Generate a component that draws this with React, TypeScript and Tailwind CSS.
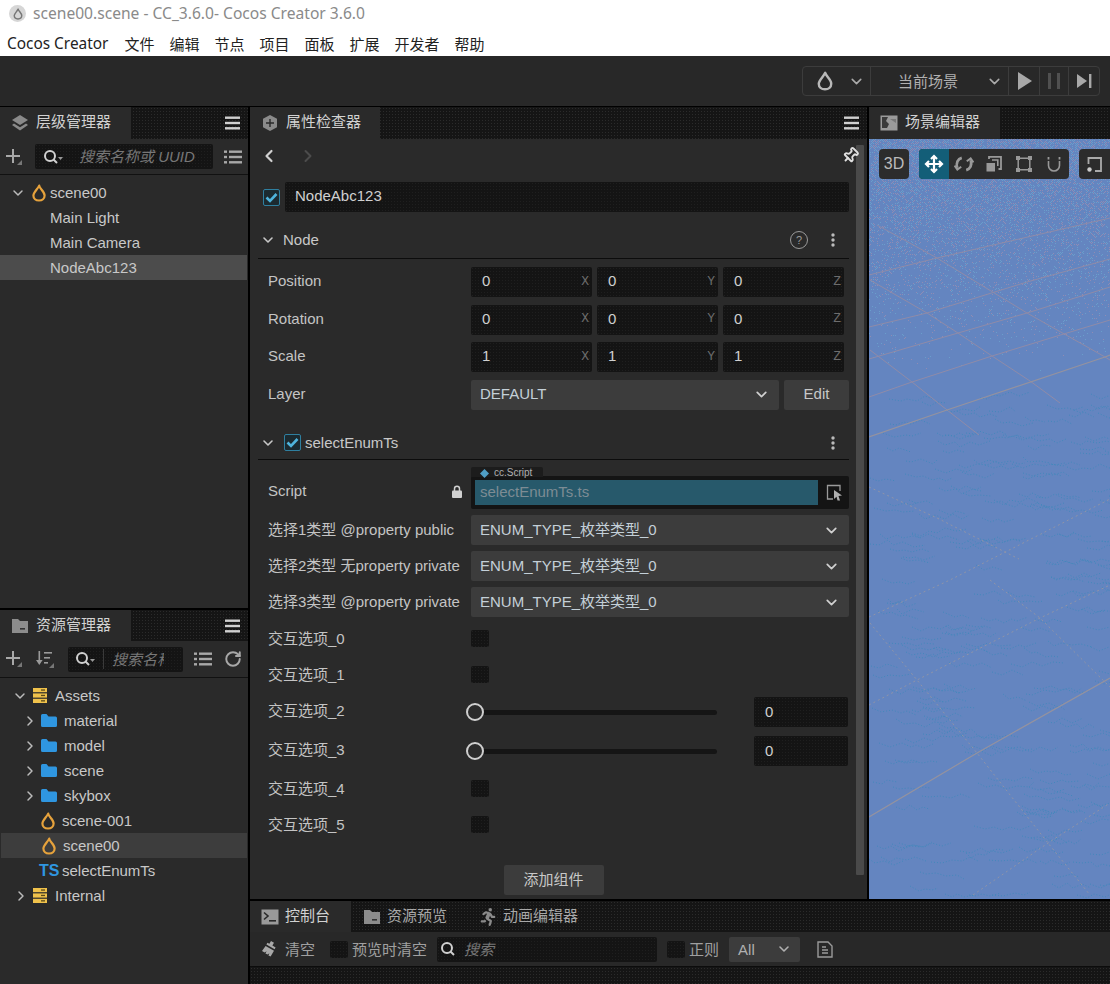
import type { ReactNode } from 'react';
import { ChevronDown, ChevronRight, ChevronLeft, RotateCw, Pin } from 'lucide-react';
import { FaRunning } from 'react-icons/fa';

const darkDots = "bg-[#151515] bg-[radial-gradient(#2b2b2b_0.6px,transparent_0.7px)] bg-[length:3px_3px]";
const fieldDots = "bg-[#141414] bg-[radial-gradient(#1f1f1f_0.6px,transparent_0.7px)] bg-[length:3px_3px]";

const Drop = ({ color = '#e6a23c', size = 18 }: { color?: string; size?: number }) => (
  <svg width={size} height={size} viewBox="0 0 18 18" fill="none">
    <path d="M9.2 1.6C9.6 4.6 14.6 7.6 14.6 11.4C14.6 14.6 12.2 16.5 9 16.5C5.8 16.5 3.4 14.6 3.4 11.4C3.4 8.6 7.6 5 9.2 1.6Z" stroke={color} strokeWidth="2.2" strokeLinejoin="round" />
  </svg>
);

const Hamburger = () => (
  <svg width="16" height="14" viewBox="0 0 16 14" fill="#d0d0d0">
    <rect y="0.5" width="15" height="2.4" />
    <rect y="5.8" width="15" height="2.4" />
    <rect y="11.1" width="15" height="2.4" />
  </svg>
);

const PlusCorner = () => (
  <svg width="18" height="18" viewBox="0 0 18 18" fill="#a8a8a8">
    <rect x="7" y="1" width="2" height="14" />
    <rect x="1" y="7" width="14" height="2" />
    <path d="M17 12V17H12Z" fill="#777" />
  </svg>
);

const ListIcon = () => (
  <svg width="18" height="14" viewBox="0 0 18 14" fill="#a8a8a8">
    <rect y="0.5" width="3" height="2.4" />
    <rect y="5.8" width="3" height="2.4" />
    <rect y="11.1" width="3" height="2.4" />
    <rect x="5" y="0.5" width="13" height="2.4" />
    <rect x="5" y="5.8" width="13" height="2.4" />
    <rect x="5" y="11.1" width="13" height="2.4" />
  </svg>
);

const Magnifier = ({ caret = true }: { caret?: boolean }) => (
  <svg width="20" height="16" viewBox="0 0 20 16" fill="none">
    <circle cx="7" cy="7" r="5" stroke="#d0d0d0" strokeWidth="2" />
    <path d="M10.5 10.5L14 14" stroke="#d0d0d0" strokeWidth="2" />
    {caret && <path d="M15 8H20L17.5 11Z" fill="#999" />}
  </svg>
);

const Layers = () => (
  <svg width="18" height="18" viewBox="0 0 18 18" fill="#8a8a8a">
    <path d="M9 1L17 6L9 11L1 6Z" />
    <path d="M3 9.5L9 13.2L15 9.5L17 11L9 16.5L1 11Z" />
  </svg>
);

const CubeIcon = () => (
  <svg width="18" height="18" viewBox="0 0 16 18">
    <path d="M8 1L15 4.8V13.2L8 17L1 13.2V4.8Z" fill="#8a8a8a" />
    <path d="M8 5V13M4 9H12" stroke="#2a2a2a" strokeWidth="1.4" />
  </svg>
);

const FolderGrey = () => (
  <svg width="18" height="16" viewBox="0 0 18 16">
    <path d="M1 1H7L9 3H17V15H1Z" fill="#8c8c8c" />
    <rect x="9" y="10" width="5" height="1.6" fill="#333" />
  </svg>
);

const ImageIcon = () => (
  <svg width="18" height="16" viewBox="0 0 18 16">
    <rect x="0.5" y="0.5" width="17" height="15" fill="#9a9a9a" />
    <path d="M2 2H8L6 6L9 9L7 13H2Z" fill="#3a3a3a" />
    <path d="M10 4H16V8Z" fill="#777" />
  </svg>
);

const TerminalIcon = () => (
  <svg width="18" height="16" viewBox="0 0 18 16">
    <rect x="0.5" y="0.5" width="17" height="15" fill="#9a9a9a" />
    <path d="M3 3.5L7 7L3 10.5" stroke="#2a2a2a" strokeWidth="1.6" fill="none" />
    <rect x="8" y="11" width="7" height="1.6" fill="#2a2a2a" />
  </svg>
);

const BrushIcon = () => (
  <svg width="18" height="18" viewBox="0 0 18 18" fill="#a8a8a8">
    <path d="M11 1L14 2.8L12.4 5.6L15.6 7.4L14.6 9.2L6.4 4.6L7.4 2.8L9.4 3.8Z" />
    <path d="M5.6 6L14 10.8L10.6 16.6L8.4 15.4L9.4 13.2L7.6 14.6L5.4 13.4L6.6 11.2L4.6 12.6L2 11Z" />
  </svg>
);

const DbIcon = () => (
  <svg width="14" height="15" viewBox="0 0 14 15">
    <rect y="0" width="14" height="4.2" fill="#f0c24b" />
    <rect y="5.4" width="14" height="4.2" fill="#f0c24b" />
    <rect y="10.8" width="14" height="4.2" fill="#f0c24b" />
    <rect x="8" y="1.4" width="4" height="1.3" fill="#5a4a1a" />
    <rect x="8" y="6.8" width="4" height="1.3" fill="#5a4a1a" />
    <rect x="8" y="12.2" width="4" height="1.3" fill="#5a4a1a" />
  </svg>
);

const BlueFolder = () => (
  <svg width="16" height="13" viewBox="0 0 16 13">
    <path d="M0 1.5A1.5 1.5 0 0 1 1.5 0H5.5L7.5 2.5H14.5A1.5 1.5 0 0 1 16 4V11.5A1.5 1.5 0 0 1 14.5 13H1.5A1.5 1.5 0 0 1 0 11.5Z" fill="#2f96e0" />
  </svg>
);

const Dots = () => (
  <svg width="4" height="14" viewBox="0 0 4 14" fill="#bbb">
    <circle cx="2" cy="2" r="1.7" />
    <circle cx="2" cy="7" r="1.7" />
    <circle cx="2" cy="12" r="1.7" />
  </svg>
);

const Check = () => (
  <div className="flex h-[17px] w-[17px] items-center justify-center rounded-[2px] border border-[#2f7f9f] bg-[#1b2a30]">
    <svg width="13" height="11" viewBox="0 0 13 11" fill="none">
      <path d="M1.5 5.5L5 9L11.5 2" stroke="#4fb4dc" strokeWidth="2.6" />
    </svg>
  </div>
);

const EmptyBox = () => <div className={`h-[17px] w-[18px] rounded-[2px] ${fieldDots}`} />;

const Panel = ({ icon, title, width, height, menu = true }: { icon: ReactNode; title: string; width: string; height: string; menu?: boolean }) => (
  <div className={`flex ${height} shrink-0 items-stretch ${darkDots}`}>
    <div className={`flex ${width} items-center gap-[7px] bg-[#2a2a2a] pl-[11px] text-[#d2d2d2]`}>
      {icon}
      <span className="pb-[3px]">{title}</span>
    </div>
    {menu && (
      <div className="ml-auto flex items-center pr-[7px]">
        <Hamburger />
      </div>
    )}
  </div>
);

const Row = ({ label, children, h = 'h-[30px]', pad = 'pb-[2px]' }: { label: string; children: ReactNode; h?: string; pad?: string }) => (
  <div className={`flex ${h} items-center`}>
    <div className={`w-[213px] shrink-0 whitespace-nowrap pl-[10px] text-[#c4c4c4] ${pad}`}>{label}</div>
    {children}
  </div>
);

const Vec3 = ({ value }: { value: string }) => (
  <div className="flex gap-[5px]">
    {['X', 'Y', 'Z'].map((axis) => (
      <div key={axis} className={`flex h-[30px] w-[121px] items-center justify-between rounded-[2px] pb-[3px] pl-[11px] pr-[3px] text-[#d0d0d0] ${fieldDots}`}>
        <span>{value}</span>
        <span className="pt-px font-['Liberation_Mono',monospace] text-[13px] text-[#6c6c6c]">{axis}</span>
      </div>
    ))}
  </div>
);

const SelectBox = ({ text, width = 'w-[378px]', pad = 'pb-[2px]' }: { text: string; width?: string; pad?: string }) => (
  <div className={`flex h-[30px] ${width} items-center justify-between rounded-[2px] bg-[#3c3c3c] pl-[9px] pr-[9px] text-[#c4d0d8]`}>
    <span className={pad}>{text}</span>
    <ChevronDown size={17} strokeWidth={2.4} color="#d0d0d0" />
  </div>
);

const Slider = () => (
  <div className="flex items-center">
    <div className="relative h-[5px] w-[246px] rounded-full bg-[#151515]">
      <div className="absolute left-[-5px] top-[-7px] h-[18px] w-[18px] rounded-full border-2 border-[#cfcfcf] bg-[#2a2a2a]" />
    </div>
    <div className={`ml-[37px] flex h-[30px] w-[94px] items-center rounded-[2px] pb-px pl-[11px] text-[#d0d0d0] ${fieldDots}`}>0</div>
  </div>
);

const TreeRow = ({ left, children, selected }: { left: string; children: ReactNode; selected?: string }) => (
  <div className={`flex h-[25px] items-center ${left} ${selected ?? ''}`}>{children}</div>
);

// scene floor: a few perspective lines plus the dither noise
const gridStrong = [
  'M0 298L78 271L236 218L241 216',
  'M0 678L108 614L241 539',
];
const gridMid = [
  'M0 220L89 194L158 174L241 148',
  'M0 188L58 174L158 143L241 120',
  'M0 136L68 119L241 79',
  'M0 258L43 243L123 217L198 194L241 181',
  'M8 86L68 119L158 174L236 218L241 221',
  'M1 141L58 174L89 194L123 217L161 242L191 264',
  'M1 211L43 243L78 271L110 296',
];
const gridFaint = [
  'M0 566L48 541L171 479L241 446',
  'M0 478L81 441L241 360',
  'M104 756L179 704L241 664',
  'M1 484L48 541L108 614L179 704L221 756',
  'M121 441L171 479L241 548',
  'M0 348L68 379L150 420',
];

let seed = 7;
const rnd = () => {
  seed = (seed * 16807) % 2147483647;
  return seed / 2147483647;
};

const noisePaths = (() => {
  const out: string[] = [];
  for (let i = 0; i < 230; i++) {
    let x = rnd() * 241;
    let y = 255 + rnd() * 505;
    let d = `M${x.toFixed(0)} ${y.toFixed(0)}`;
    const n = 3 + Math.floor(rnd() * 4);
    for (let k = 0; k < n; k++) {
      x += 5 + rnd() * 7;
      y += (k % 2 === 0 ? 1 : -1) * (1 + rnd() * 4);
      d += `L${x.toFixed(0)} ${y.toFixed(0)}`;
    }
    out.push(d);
  }
  return out;
})();

// sky dither: dots thin out toward the horizon
const skyDots = (() => {
  let warm = '';
  let cool = '';
  for (let y = 0; y < 240; y++) {
    const p = 0.62 * Math.pow(1 - y / 240, 1.6);
    for (let x = (y % 2); x < 241; x += 2) {
      const r = rnd();
      if (r < p * 0.5) warm += `M${x} ${y}h1v1h-1z`;
      else if (r < p) cool += `M${x} ${y}h1v1h-1z`;
    }
  }
  return { warm, cool };
})();

const SceneBackdrop = () => (
  <svg className="absolute inset-0 h-full w-full" viewBox="0 0 241 760" preserveAspectRatio="none">
    <path d={skyDots.warm} fill="#8f8cb4" shapeRendering="crispEdges" />
    <path d={skyDots.cool} fill="#6a9ecb" shapeRendering="crispEdges" />
    {noisePaths.map((d, i) => (
      <path key={i} d={d} fill="none" stroke="#4388bc" strokeWidth="1" strokeDasharray="1 2" />
    ))}
    {gridFaint.map((d, i) => (
      <path key={i} d={d} fill="none" stroke="#8f94a8" strokeWidth="1" strokeDasharray="2 3" />
    ))}
    {gridMid.map((d, i) => (
      <path key={i} d={d} fill="none" stroke="#8f8ba8" strokeWidth="1" />
    ))}
    {gridStrong.map((d, i) => (
      <path key={i} d={d} fill="none" stroke="#94929f" strokeWidth="1.2" />
    ))}
  </svg>
);

const toolIcon = "flex w-[30px] items-center justify-center";

const App = () => {
  return (
    <div className="flex h-[984px] w-[1110px] flex-col overflow-hidden bg-black font-['Liberation_Sans','Noto_Sans_CJK_SC',sans-serif] text-[15px] leading-none">
      {/* Window title and menu */}
      <div className="h-[56px] shrink-0 bg-white font-['Noto_Sans','Noto_Sans_CJK_SC',sans-serif] text-[15px]">
        <div className="flex h-[27px] items-center pl-[9px] text-[#8a8a8a]">
          <div className="mr-[7px] flex h-[17px] w-[17px] items-center justify-center rounded-full bg-[#d6d6d6]">
            <Drop color="#777" size={12} />
          </div>
          <span className="text-[15.6px]">scene00.scene - CC_3.6.0- Cocos Creator 3.6.0</span>
        </div>
        <div className="flex h-[29px] items-center gap-[15px] pl-[7px] pt-[5px] text-[#222]">
          <span className="mr-px text-[15.4px]">Cocos Creator</span>
          <span>文件</span>
          <span>编辑</span>
          <span>节点</span>
          <span>项目</span>
          <span>面板</span>
          <span>扩展</span>
          <span>开发者</span>
          <span>帮助</span>
        </div>
      </div>

      {/* Top toolbar */}
      <div className="flex h-[50px] shrink-0 items-center justify-end bg-[#282828] pr-[10px]">
        <div className="flex h-[30px] w-[298px] items-stretch rounded-[4px] border border-[#3c3c3c] text-[#b0b0b0]">
          <div className="flex w-[68px] items-center gap-[13px] border-r border-[#3c3c3c] pl-[12px]">
            <Drop color="#b8b8b8" size={20} />
            <ChevronDown size={17} strokeWidth={2.2} color="#aaa" />
          </div>
          <div className="flex w-[138px] items-center justify-between border-r border-[#3c3c3c] pl-[27px] pr-[5px]">
            <span>当前场景</span>
            <ChevronDown size={17} strokeWidth={2.2} color="#aaa" />
          </div>
          <div className="flex w-[31px] items-center justify-center border-r border-[#3c3c3c] pl-px">
            <svg width="14" height="18" viewBox="0 0 14 18" fill="#a8a8a8"><path d="M0 0L14 9L0 18Z" /></svg>
          </div>
          <div className="flex w-[29px] items-center justify-center gap-[6px] border-r border-[#3c3c3c]">
            <div className="h-[16px] w-[3px] bg-[#505050]" />
            <div className="h-[16px] w-[3px] bg-[#505050]" />
          </div>
          <div className="flex flex-1 items-center justify-center">
            <svg width="15" height="16" viewBox="0 0 15 16" fill="#a8a8a8"><path d="M0 1L10 8L0 15Z" /><rect x="12" y="1" width="2.4" height="14" /></svg>
          </div>
        </div>
      </div>

      {/* Panels */}
      <div className="flex min-h-0 flex-1 pt-px">
        {/* Left column */}
        <div className="flex w-[248px] shrink-0 flex-col gap-[2px]">
          <div className="flex h-[501px] shrink-0 flex-col bg-[#2a2a2a]">
            <Panel icon={<Layers />} title="层级管理器" width="w-[131px]" height="h-[32px]" />
            <div className="flex h-[36px] shrink-0 items-center border-b border-[#111] pl-[5px]">
              <PlusCorner />
              <div className={`ml-[12px] flex h-[25px] w-[178px] items-center rounded-[2px] pl-[8px] ${fieldDots}`}>
                <Magnifier />
                <span className="ml-[16px] whitespace-nowrap italic text-[#777]">搜索名称或 UUID</span>
              </div>
              <div className="ml-[11px]"><ListIcon /></div>
            </div>
            <div className="pt-[5px] text-[#c8c8c8]">
              <TreeRow left="pl-[10px]">
                <ChevronDown size={16} strokeWidth={2.2} color="#bbb" />
                <div className="ml-[4px]"><Drop size={18} /></div>
                <span className="ml-[2px]">scene00</span>
              </TreeRow>
              <TreeRow left="pl-[50px]">Main Light</TreeRow>
              <TreeRow left="pl-[50px]">Main Camera</TreeRow>
              <TreeRow left="pl-[50px]" selected="bg-[#4c4c4c] mr-px">NodeAbc123</TreeRow>
            </div>
          </div>

          <div className="flex min-h-0 flex-1 flex-col bg-[#2a2a2a]">
            <Panel icon={<FolderGrey />} title="资源管理器" width="w-[131px]" height="h-[31px]" />
            <div className="flex h-[37px] shrink-0 items-center border-b border-[#111] pl-[5px]">
              <PlusCorner />
              <svg className="ml-[13px]" width="18" height="18" viewBox="0 0 18 18" fill="#9a9a9a">
                <rect x="2.5" y="1" width="1.6" height="12" />
                <path d="M0 10H6.6L3.3 15Z" />
                <rect x="8" y="2" width="8" height="1.6" />
                <rect x="8" y="7" width="6" height="1.6" />
                <rect x="8" y="12" width="4" height="1.6" />
                <path d="M18 13V18H13Z" fill="#777" />
              </svg>
              <div className={`ml-[14px] flex h-[25px] w-[115px] items-center overflow-hidden rounded-[2px] pl-[7px] ${fieldDots}`}>
                <Magnifier />
                <div className="ml-[8px] mr-[8px] h-[20px] w-px shrink-0 bg-[#3a3a3a]" />
                <span className="w-[52px] shrink-0 overflow-hidden whitespace-nowrap italic text-[#777]">搜索名称</span>
              </div>
              <div className="ml-[11px]"><ListIcon /></div>
              <div className="ml-[12px]"><RotateCw size={18} strokeWidth={2.6} color="#a8a8a8" /></div>
            </div>
            <div className="pt-[5px] text-[#c8c8c8]">
              <TreeRow left="pl-[12px]">
                <ChevronDown size={16} strokeWidth={2.2} color="#bbb" />
                <div className="ml-[5px]"><DbIcon /></div>
                <span className="ml-[8px]">Assets</span>
              </TreeRow>
              {['material', 'model', 'scene', 'skybox'].map((name) => (
                <TreeRow key={name} left="pl-[22px]">
                  <ChevronRight size={16} strokeWidth={2.2} color="#bbb" />
                  <div className="ml-[3px]"><BlueFolder /></div>
                  <span className="ml-[7px]">{name}</span>
                </TreeRow>
              ))}
              <TreeRow left="pl-[39px]">
                <Drop size={18} />
                <span className="ml-[5px]">scene-001</span>
              </TreeRow>
              <TreeRow left="pl-[39px]" selected="bg-[#3d3d3d] mr-px ml-px">
                <Drop size={18} />
                <span className="ml-[5px]">scene00</span>
              </TreeRow>
              <TreeRow left="pl-[39px]">
                <span className="w-[18px] font-bold text-[16px] text-[#2f96e0]">TS</span>
                <span className="ml-[5px]">selectEnumTs</span>
              </TreeRow>
              <TreeRow left="pl-[13px]">
                <ChevronRight size={16} strokeWidth={2.2} color="#bbb" />
                <div className="ml-[4px]"><DbIcon /></div>
                <span className="ml-[8px]">Internal</span>
              </TreeRow>
            </div>
          </div>
        </div>

        {/* Center and right */}
        <div className="ml-[2px] flex min-w-0 flex-1 flex-col">
          <div className="flex h-[792px] shrink-0 gap-[2px]">
            {/* Inspector */}
            <div className="flex w-[617px] shrink-0 flex-col bg-[#2a2a2a]">
              <Panel icon={<CubeIcon />} title="属性检查器" width="w-[130px]" height="h-[32px]" />
              <div className="flex min-h-0 flex-1">
                <div className="ml-[8px] flex w-[591px] shrink-0 flex-col">
                  <div className="flex h-[33px] shrink-0 items-center pl-[1px]">
                    <ChevronLeft size={20} strokeWidth={2.6} color="#d0d0d0" />
                    <div className="ml-[19px]"><ChevronRight size={20} strokeWidth={2.4} color="#4c4c4c" /></div>
                    <div className="ml-auto mr-[-10px]"><Pin size={17} strokeWidth={2.6} color="#e0e0e0" className="rotate-45" /></div>
                  </div>
                  <div className="mt-[10px] flex h-[30px] shrink-0 items-center pl-[5px]">
                    <Check />
                    <div className={`ml-[5px] flex h-[30px] flex-1 items-center rounded-[2px] pb-[3px] pl-[10px] text-[#d0d0d0] ${fieldDots}`}>NodeAbc123</div>
                  </div>

                  <div className="mt-[10px] flex h-[37px] shrink-0 items-center border-b border-[#0c0c0c] pl-[2px] text-[#c8c8c8]">
                    <ChevronDown size={16} strokeWidth={2.4} color="#c8c8c8" />
                    <span className="ml-[7px] pb-px">Node</span>
                    <div className="ml-auto mr-[23px] flex h-[18px] w-[18px] items-center justify-center rounded-full border border-[#9a9a9a] text-[11px] text-[#9a9a9a]">?</div>
                    <div className="mr-[14px]"><Dots /></div>
                  </div>

                  <div className="mt-[8px] flex shrink-0 flex-col gap-[7.5px]">
                    <Row label="Position" pad="pb-[3px]"><Vec3 value="0" /></Row>
                    <Row label="Rotation" pad="pb-[3px]"><Vec3 value="0" /></Row>
                    <Row label="Scale" pad="pb-[3px]"><Vec3 value="1" /></Row>
                    <Row label="Layer" pad="pb-[3px]">
                      <SelectBox text="DEFAULT" width="w-[308px]" pad="pb-[3px]" />
                      <div className="ml-[5px] flex h-[30px] w-[65px] items-center justify-center rounded-[2px] bg-[#3c3c3c] pb-[3px] text-[#c8c8c8]">Edit</div>
                    </Row>
                  </div>

                  <div className="mt-[16.5px] flex h-[34px] shrink-0 items-center border-b border-[#0c0c0c] pl-[2px] text-[#c8c8c8]">
                    <ChevronDown size={16} strokeWidth={2.4} color="#c8c8c8" />
                    <div className="ml-[8px]"><Check /></div>
                    <span className="ml-[4px]">selectEnumTs</span>
                    <div className="ml-auto mr-[14px]"><Dots /></div>
                  </div>

                  <div className="mt-[7px] flex h-[42px] shrink-0 items-end">
                    <div className="flex h-[33px] w-[213px] shrink-0 items-center justify-between pb-[3px] pl-[10px] pr-[9px] text-[#c4c4c4]">
                      <span className="pb-[2px]">Script</span>
                      <svg width="10" height="13" viewBox="0 0 10 13"><path d="M2.5 6V3.8A2.5 2.5 0 0 1 7.5 3.8V6" stroke="#d0d0d0" strokeWidth="1.5" fill="none" /><rect y="5.5" width="10" height="7.5" rx="1" fill="#d0d0d0" /></svg>
                    </div>
                    <div className="relative flex h-[33px] w-[378px] items-center rounded-[2px] bg-[#141414] pl-[4px]">
                      <div className="absolute left-0 top-[-9px] flex h-[10px] w-[72px] items-center gap-[5px] rounded-t-[2px] bg-[#1c1c1c] pl-[9px] pt-[2px] text-[10px] text-[#b0b0b0]">
                        <svg width="9" height="9" viewBox="0 0 9 9"><path d="M4.5 0L9 4.5L4.5 9L0 4.5Z" fill="#4f9dc4" /></svg>
                        <span>cc.Script</span>
                      </div>
                      <div className="flex h-[25px] w-[343px] items-center bg-[#27596b] pb-[2px] pl-[5px] text-[#7d8c94]">selectEnumTs.ts</div>
                      <svg className="ml-[8px]" width="17" height="17" viewBox="0 0 17 17" fill="none">
                        <path d="M7 15H1.5V1.5H14V7" stroke="#9a9a9a" strokeWidth="1.3" />
                        <path d="M8 6L16 11.5L12.5 12L14 16.5L11.5 16.5L10.5 12.8L8 15Z" fill="#b0b0b0" />
                      </svg>
                    </div>
                  </div>

                  <div className="mt-[6px] flex shrink-0 flex-col gap-[6px]">
                    <Row label="选择1类型 @property public"><SelectBox text="ENUM_TYPE_枚举类型_0" /></Row>
                    <Row label="选择2类型 无property private"><SelectBox text="ENUM_TYPE_枚举类型_0" /></Row>
                    <Row label="选择3类型 @property private"><SelectBox text="ENUM_TYPE_枚举类型_0" /></Row>
                  </div>

                  <div className="mt-[3.5px] flex shrink-0 flex-col">
                    <Row label="交互选项_0" h="h-[36px]" pad="pb-0"><EmptyBox /></Row>
                    <Row label="交互选项_1" h="h-[36px]" pad="pb-0"><EmptyBox /></Row>
                    <Row label="交互选项_2" h="h-[39px]" pad="pb-[3px]"><Slider /></Row>
                    <Row label="交互选项_3" h="h-[39px]" pad="pb-[3px]"><Slider /></Row>
                    <Row label="交互选项_4" h="h-[36px]" pad="pb-0"><EmptyBox /></Row>
                    <Row label="交互选项_5" h="h-[36px]" pad="pb-0"><EmptyBox /></Row>
                  </div>

                  <div className="mt-[22.5px] flex h-[30px] w-[100px] shrink-0 items-center justify-center self-center rounded-[2px] bg-[#3c3c3c] pb-[2px] text-[#c8c8c8]">添加组件</div>
                </div>
                <div className="ml-[7px] mb-[24px] mt-[6px] w-[8px] rounded-[1px] bg-[#4a4a4a]" />
              </div>
            </div>

            {/* Scene */}
            <div className="flex min-w-0 flex-1 flex-col">
              <Panel icon={<ImageIcon />} title="场景编辑器" width="w-[131px]" height="h-[32px]" menu={false} />
              <div className="relative min-h-0 flex-1 overflow-hidden bg-[#6485c0]">
                <SceneBackdrop />
                <div className="relative flex gap-[10px] p-[10px]">
                  <div className="flex h-[30px] w-[30px] shrink-0 items-center justify-center rounded-[4px] bg-[#2c2c2c] text-[16px] text-[#bbb]">3D</div>
                  <div className="flex h-[30px] w-[150px] shrink-0 overflow-hidden rounded-[4px] bg-[#2c2c2c]">
                    <div className={`${toolIcon} bg-[#135e78]`}>
                      <svg width="20" height="20" viewBox="0 0 20 20" fill="none" stroke="#fff" strokeWidth="2.2">
                        <path d="M10 2V18M2 10H18" />
                        <path d="M7 5L10 2L13 5M7 15L10 18L13 15M5 7L2 10L5 13M15 7L18 10L15 13" />
                      </svg>
                    </div>
                    <div className={toolIcon}>
                      <svg width="20" height="20" viewBox="0 0 18 18" fill="none" stroke="#999" strokeWidth="2.4">
                        <path d="M7 3.5C3.5 4.5 1.5 8 3 12.5" />
                        <path d="M11 14.5C14.5 13.5 16.5 10 15 5.5" />
                        <path d="M0.5 10.5L3 14L6.5 11.5M17.5 7.5L15 4L11.5 6.5" strokeWidth="1.8" />
                      </svg>
                    </div>
                    <div className={toolIcon}>
                      <svg width="16" height="16" viewBox="0 0 16 16" fill="none">
                        <path d="M3 3V0.9H15V13H12.5" stroke="#999" strokeWidth="1.8" />
                        <path d="M6 4H11.8V10" stroke="#999" strokeWidth="1.6" />
                        <rect x="0.5" y="7" width="8.5" height="8.5" fill="#999" />
                      </svg>
                    </div>
                    <div className={toolIcon}>
                      <svg width="16" height="16" viewBox="0 0 16 16" fill="#999">
                        <path d="M3 2.2H13M3 13.8H13M2.2 3V13M13.8 3V13" stroke="#999" strokeWidth="1.5" />
                        <rect width="4" height="4" />
                        <rect x="12" width="4" height="4" />
                        <rect y="12" width="4" height="4" />
                        <rect x="12" y="12" width="4" height="4" />
                      </svg>
                    </div>
                    <div className={toolIcon}>
                      <svg width="14" height="16" viewBox="0 0 14 16" fill="none" stroke="#999">
                        <path d="M1.5 5V9.5A5.5 5.5 0 0 0 12.5 9.5V5" strokeWidth="1.6" />
                        <path d="M1.5 1V3.5M12.5 1V3.5" strokeWidth="1.8" />
                      </svg>
                    </div>
                  </div>
                  <div className="flex h-[30px] w-[50px] shrink-0 items-center rounded-[4px] bg-[#2c2c2c] pl-[8px]">
                    <svg width="15" height="15" viewBox="0 0 15 15" fill="none">
                      <path d="M1.5 7V1H14V14H8" stroke="#aaa" strokeWidth="1.8" />
                      <circle cx="2.5" cy="12.5" r="2.2" fill="#ccc" />
                    </svg>
                  </div>
                </div>
              </div>
            </div>
          </div>

          {/* Console */}
          <div className="mt-[2px] flex min-h-0 flex-1 flex-col">
            <div className={`flex h-[31px] shrink-0 items-stretch ${darkDots}`}>
              <div className="flex w-[101px] items-center gap-[6px] bg-[#2a2a2a] pl-[11px] text-[#d2d2d2]">
                <TerminalIcon />
                <span className="pb-[3px]">控制台</span>
              </div>
              <div className="ml-[12px] flex items-center gap-[6px] text-[#a8a8a8]">
                <FolderGrey />
                <span className="pb-[3px]">资源预览</span>
              </div>
              <div className="ml-[32px] flex items-center gap-[6px] text-[#a8a8a8]">
                <FaRunning size={18} color="#8a8a8a" />
                <span className="pb-[3px]">动画编辑器</span>
              </div>
            </div>
            <div className="flex h-[35px] shrink-0 items-center border-b border-[#0c0c0c] bg-[#282828] pl-[10px] text-[#a0a0a0]">
              <BrushIcon />
              <span className="ml-[7px]">清空</span>
              <div className="ml-[15px]"><EmptyBox /></div>
              <span className="ml-[4px]">预览时清空</span>
              <div className={`ml-[10px] flex h-[25px] w-[220px] items-center rounded-[2px] pl-[3px] ${fieldDots}`}>
                <Magnifier caret={false} />
                <span className="ml-[4px] italic text-[#777]">搜索</span>
              </div>
              <div className="ml-[10px]"><EmptyBox /></div>
              <span className="ml-[4px]">正则</span>
              <div className="ml-[10px] flex h-[25px] w-[71px] items-center justify-between rounded-[2px] bg-[#3c3c3c] pl-[9px] pr-[8px] text-[#b0b0b0]">
                <span>All</span>
                <ChevronDown size={16} strokeWidth={2.4} color="#b0b0b0" />
              </div>
              <svg className="ml-[17px]" width="16" height="17" viewBox="0 0 16 17" fill="none" stroke="#9a9a9a" strokeWidth="1.4">
                <path d="M1 1H11L15 5V16H1Z" />
                <path d="M5 6H9M5 9H11M5 12H11" />
              </svg>
            </div>
            <div className={`flex-1 ${darkDots}`} />
          </div>
        </div>
      </div>
    </div>
  );
};

export default App;
